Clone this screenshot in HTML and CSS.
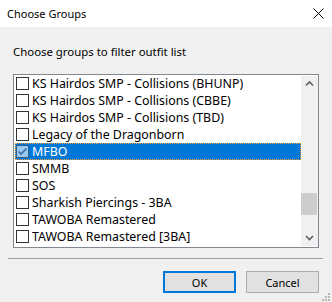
FILE: index.html
```html
<!DOCTYPE html>
<html lang="en">
<head>
    <meta charset="UTF-8">
    <meta name="viewport" content="width=device-width, initial-scale=1.0">
    <title>Choose Groups</title>
    <link rel="stylesheet" href="styles.css">
</head>
<body>
    <div class="dialog">
        <div class="titlebar">
            <span class="title">Choose Groups</span>
            <svg class="close" width="11" height="11" viewBox="0 0 11 11">
                <path d="M0.5 0.5 L10.5 10.5 M10.5 0.5 L0.5 10.5" stroke="#000" stroke-width="1" fill="none"/>
            </svg>
        </div>

        <div class="body">
            <p class="prompt">Choose groups to filter outfit list</p>

            <!-- list of groups -->
            <div class="listbox">
                <ul class="items">
                    <li class="item"><span class="box"></span>KS Hairdos SMP - Collisions (BHUNP)</li>
                    <li class="item"><span class="box"></span>KS Hairdos SMP - Collisions (CBBE)</li>
                    <li class="item"><span class="box"></span>KS Hairdos SMP - Collisions (TBD)</li>
                    <li class="item"><span class="box"></span>Legacy of the Dragonborn</li>
                    <li class="item selected">
                        <span class="box checked">
                            <svg width="11" height="11" viewBox="0 0 11 11">
                                <path d="M1.5 5.5 L4 8 L9.5 2.5" stroke="#3a6ea5" stroke-width="1.6" fill="none"/>
                            </svg>
                        </span>MFBO
                    </li>
                    <li class="item"><span class="box"></span>SMMB</li>
                    <li class="item"><span class="box"></span>SOS</li>
                    <li class="item"><span class="box"></span>Sharkish Piercings - 3BA</li>
                    <li class="item"><span class="box"></span>TAWOBA Remastered</li>
                    <li class="item"><span class="box"></span>TAWOBA Remastered [3BA]</li>
                </ul>
                <div class="scrollbar">
                    <svg class="arrow" width="17" height="17" viewBox="0 0 17 17">
                        <path d="M5 9.5 L8.5 6 L12 9.5" stroke="#606060" stroke-width="1.6" fill="none"/>
                    </svg>
                    <div class="track">
                        <div class="thumb"></div>
                    </div>
                    <svg class="arrow" width="17" height="17" viewBox="0 0 17 17">
                        <path d="M5 7 L8.5 10.5 L12 7" stroke="#606060" stroke-width="1.6" fill="none"/>
                    </svg>
                </div>
            </div>

            <div class="separator"></div>

            <div class="buttons">
                <button class="btn default">OK</button>
                <button class="btn">Cancel</button>
            </div>
        </div>

        <svg class="grip" width="9" height="9" viewBox="0 0 9 9">
            <rect x="6" y="0" width="2" height="2" fill="#b8b8b8"/>
            <rect x="3" y="3" width="2" height="2" fill="#b8b8b8"/>
            <rect x="6" y="3" width="2" height="2" fill="#b8b8b8"/>
            <rect x="0" y="6" width="2" height="2" fill="#b8b8b8"/>
            <rect x="3" y="6" width="2" height="2" fill="#b8b8b8"/>
            <rect x="6" y="6" width="2" height="2" fill="#b8b8b8"/>
        </svg>
    </div>
</body>
</html>
```

FILE: styles.css
```css
* {
    margin: 0;
    padding: 0;
    box-sizing: border-box;
}

body {
    background-color: #f0f0f0;
    font-family: 'Noto Sans', sans-serif;
    font-size: 11px;
    color: #000;
}

.dialog {
    position: relative;
    width: 332px;
    height: 302px;
}

.titlebar {
    height: 27px;
    background-color: #fff;
    display: flex;
    align-items: center;
    justify-content: space-between;
    padding: 0 8px 1px 7px;
}

.close {
    display: block;
}

.body {
    padding: 16px 0 0 13px;
}

.prompt {
    height: 31px;
    line-height: 17px;
    font-size: 11.4px;
}

.listbox {
    width: 306px;
    height: 174px;
    border: 1px solid #828790;
    background-color: #fff;
    display: flex;
}

.items {
    list-style: none;
    flex: 1;
    padding-left: 1px;
    overflow: hidden;
    font-size: 12.4px;
}

.item {
    height: 17px;
    display: flex;
    align-items: center;
    white-space: nowrap;
    padding-left: 1px;
}

.item.selected {
    background-color: #0078d7;
    color: #fff;
    outline: 1px dotted #f7a334;
    outline-offset: -1px;
}

.box {
    width: 13px;
    height: 13px;
    border: 1px solid #333;
    background-color: #fff;
    margin-right: 3px;
    flex-shrink: 0;
}

.box.checked {
    background-color: #99c9ef;
    border-color: #2d5d8c;
}

.box svg {
    display: block;
}

.scrollbar {
    width: 17px;
    background-color: #f0f0f0;
    display: flex;
    flex-direction: column;
    margin: 1px 0;
}

.arrow {
    display: block;
}

.track {
    flex: 1;
    padding-top: 100px;
}

.thumb {
    height: 22px;
    margin-right: 1px;
    background-color: #cdcdcd;
}

.separator {
    margin: 10px 0 0 -5px;
    width: 315px;
    height: 1px;
    background-color: #a0a0a0;
}

.buttons {
    display: flex;
    gap: 10px;
    padding: 12px 0 0 150px;
}

.btn {
    width: 73px;
    height: 22px;
    font-family: 'Noto Sans', sans-serif;
    font-size: 11px;
    background-color: #e1e1e1;
    border: 1px solid #adadad;
    color: #000;
}

.btn.default {
    border: 2px solid #0078d7;
}

/* size grip in the corner */
.grip {
    position: absolute;
    right: 1px;
    bottom: 0;
}
```
